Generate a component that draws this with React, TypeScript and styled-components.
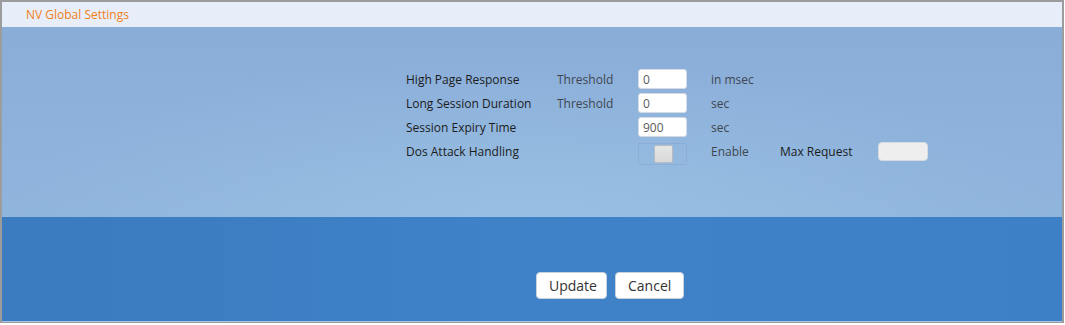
import React from "react";
import styled, { createGlobalStyle } from "styled-components";

const Global = createGlobalStyle`
  html, body { margin: 0; padding: 0; background: #ffffff; }
  body { font-family: "Open Sans", "Liberation Sans", sans-serif; }
`;

const Panel = styled.div`
  box-sizing: border-box;
  width: 1064px;
  height: 323px;
  border-style: solid;
  border-color: #9c9c9c;
  border-width: 2px 2px 1px 2px;
  display: flex;
  flex-direction: column;
`;

const Header = styled.div`
  height: 25px;
  background: #e8eef9;
  color: #ef7f1a;
  font-size: 12px;
  line-height: 25px;
  padding-left: 24px;
  flex: none;
`;

const TopSection = styled.div`
  height: 190px;
  flex: none;
  box-sizing: border-box;
  padding: 42px 0 0 404px;
  background:
    radial-gradient(ellipse 70% 120% at 50% 100%, rgba(160, 200, 232, 0.55), rgba(160, 200, 232, 0) 70%),
    linear-gradient(to bottom, #8aadd8 0%, #90b5dd 100%);
`;

const Form = styled.div`
  display: grid;
  grid-template-columns: 151px 81px 49px 24px 69px 98px 50px;
  grid-auto-rows: 20px;
  row-gap: 4px;
  align-items: center;
  font-size: 12px;
`;

const Label = styled.div<{ $dark?: boolean }>`
  color: ${(p) => (p.$dark ? "#1c1c1c" : "#3f4650")};
  white-space: nowrap;
  grid-column: span ${(p: any) => p.$span ?? 1};
`;

const Cell = styled.div<{ $col: number }>`
  grid-column: ${(p) => p.$col};
  white-space: nowrap;
`;

const Input = styled.input`
  box-sizing: border-box;
  width: 49px;
  height: 20px;
  border: 1px solid #d4dbe4;
  border-radius: 3px;
  background: #ffffff;
  padding: 0 0 0 4px;
  font-family: inherit;
  font-size: 12px;
  color: #5a5a5a;
  outline: none;
`;

const MaxInput = styled(Input)`
  width: 50px;
  height: 19px;
  background: #eeeeee;
  border-color: #d6dbe0;
  border-radius: 4px;
`;

const Track = styled.div`
  box-sizing: border-box;
  width: 49px;
  height: 22px;
  margin-top: 6px;
  border: 1px solid rgba(70, 110, 160, 0.12);
  border-radius: 2px;
  display: flex;
  justify-content: center;
  align-items: flex-start;
  padding-top: 1px;
`;

const Knob = styled.div`
  box-sizing: border-box;
  width: 19px;
  height: 18px;
  margin-left: 1px;
  background: linear-gradient(#e6e6e6, #d9d9d9);
  border: 1px solid #b8bcc2;
  border-radius: 2px;
`;

const BottomSection = styled.div`
  flex: 1;
  box-sizing: border-box;
  background: linear-gradient(to right, #3b7bc0, #3f82c7 50%, #3d80c6);
  border-bottom: 1px solid #a9c3e3;
  display: flex;
  align-items: flex-start;
  gap: 8px;
  padding: 55px 0 0 534px;
`;

const Button = styled.button`
  box-sizing: border-box;
  height: 27px;
  padding: 0 12px;
  min-width: 69px;
  background: #ffffff;
  border: 1px solid #c9d2dd;
  border-radius: 4px;
  font-family: "Open Sans", "Liberation Sans", sans-serif;
  font-size: 14px;
  color: #333333;
  cursor: pointer;
`;

export default function App() {
  return (
    <>
      <Global />
      <Panel>
        <Header>NV Global Settings</Header>
        <TopSection>
          <Form>
            <Cell $col={1}><Label $dark>High Page Response</Label></Cell>
            <Cell $col={2}><Label>Threshold</Label></Cell>
            <Cell $col={3}><Input defaultValue="0" /></Cell>
            <Cell $col={5}><Label>in msec</Label></Cell>

            <Cell $col={1}><Label $dark>Long Session Duration</Label></Cell>
            <Cell $col={2}><Label>Threshold</Label></Cell>
            <Cell $col={3}><Input defaultValue="0" /></Cell>
            <Cell $col={5}><Label>sec</Label></Cell>

            <Cell $col={1}><Label $dark>Session Expiry Time</Label></Cell>
            <Cell $col={3}><Input defaultValue="900" /></Cell>
            <Cell $col={5}><Label>sec</Label></Cell>

            <Cell $col={1}><Label $dark>Dos Attack Handling</Label></Cell>
            <Cell $col={3}><Track><Knob /></Track></Cell>
            <Cell $col={5}><Label>Enable</Label></Cell>
            <Cell $col={6}><Label $dark>Max Request</Label></Cell>
            <Cell $col={7}><MaxInput defaultValue="" /></Cell>
          </Form>
        </TopSection>
        <BottomSection>
          <Button style={{ width: 71 }}>Update</Button>
          <Button>Cancel</Button>
        </BottomSection>
      </Panel>
    </>
  );
}
